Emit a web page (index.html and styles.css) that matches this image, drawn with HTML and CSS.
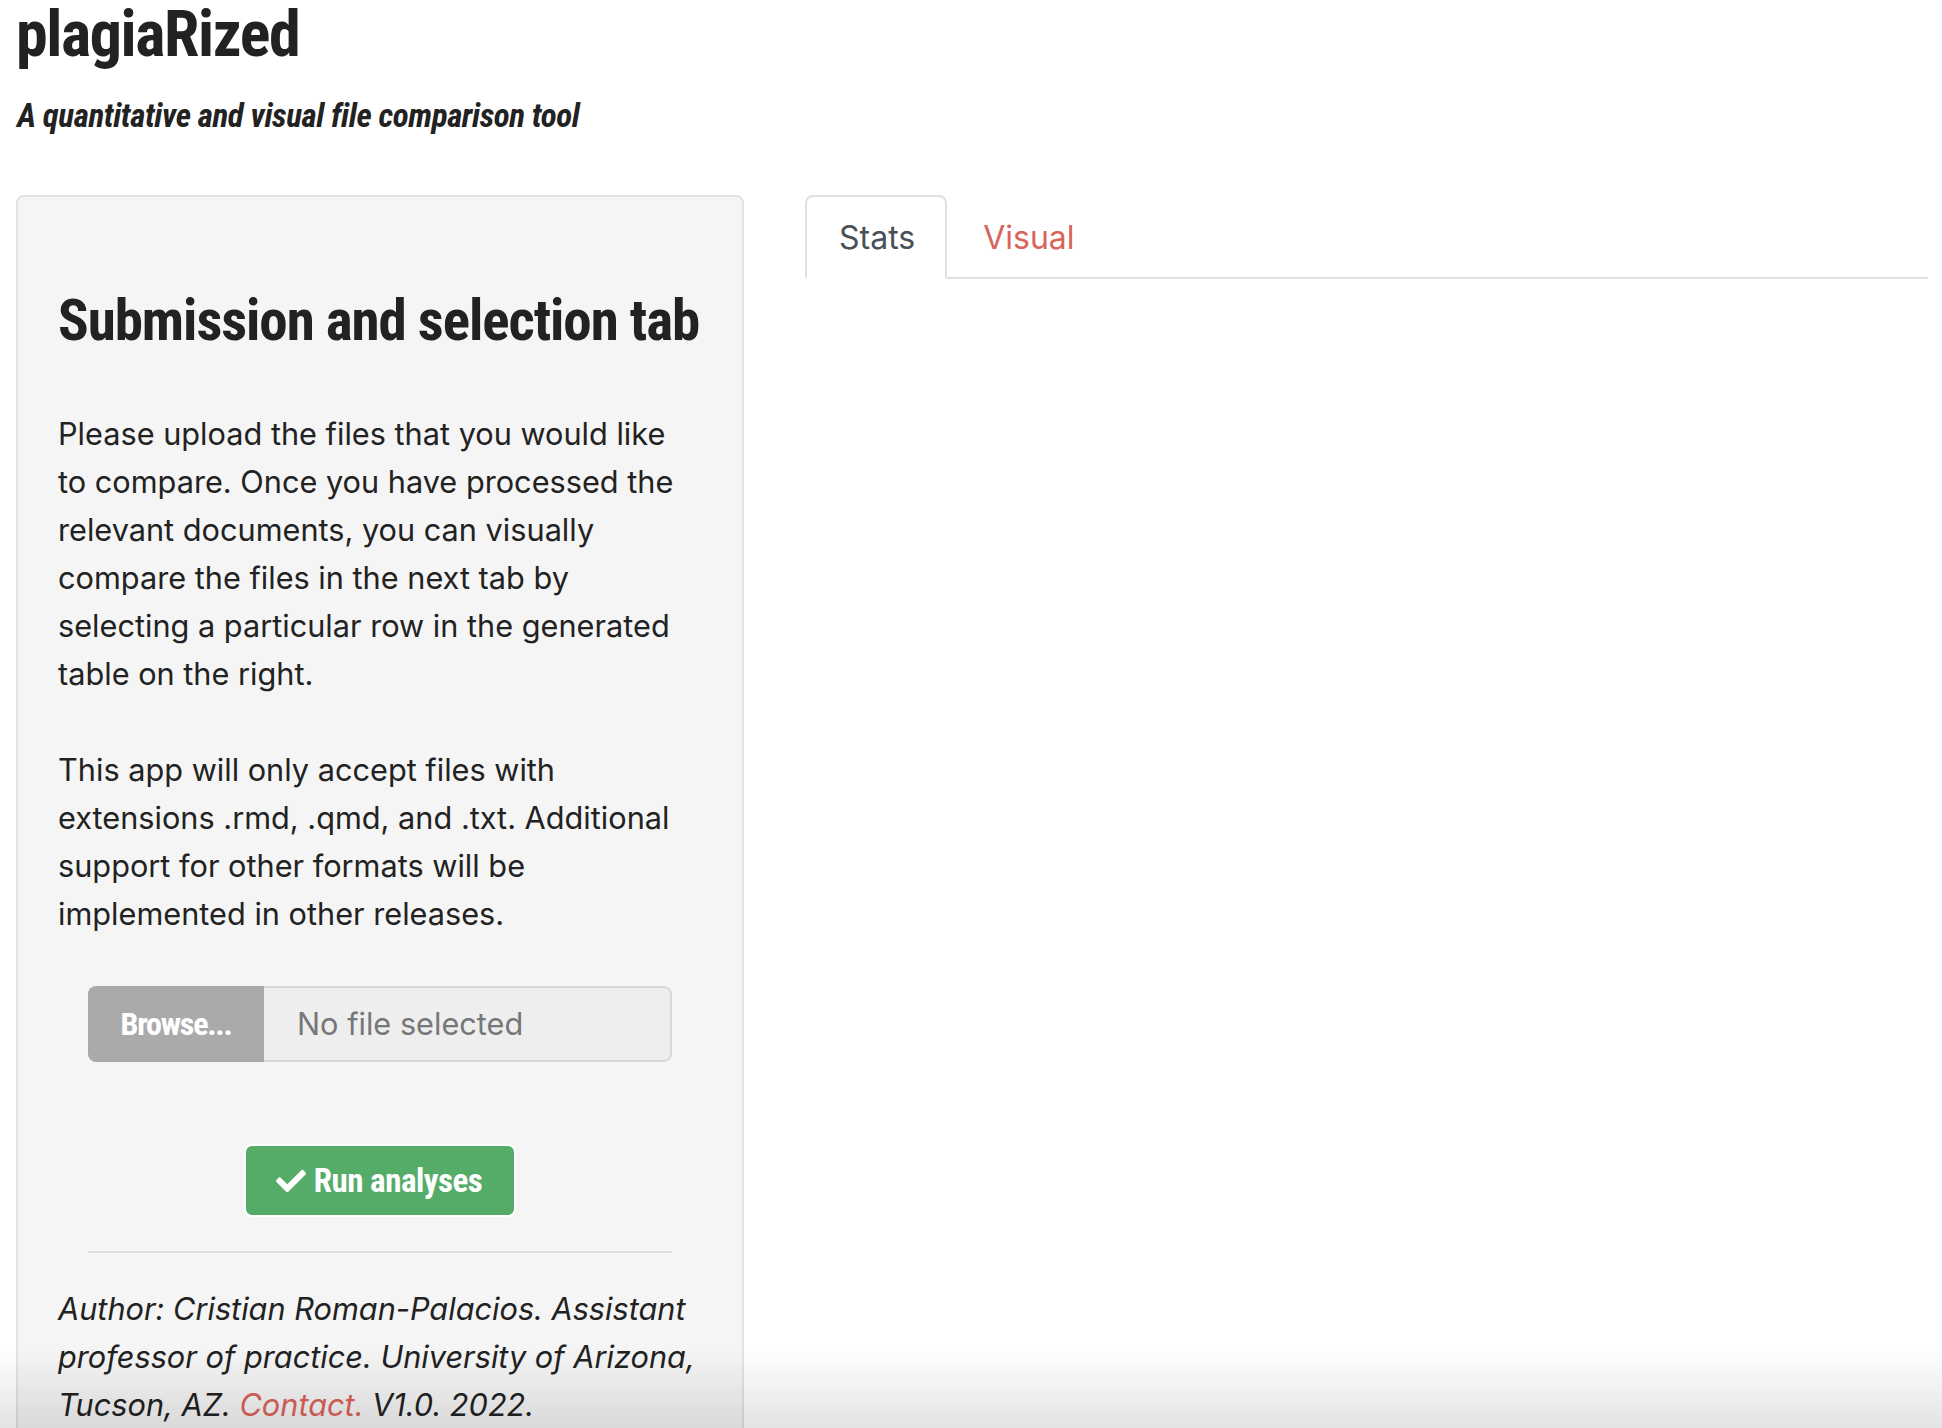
FILE: index.html
```html
<!DOCTYPE html>
<html lang="en">
<head>
<meta charset="utf-8">
<title>plagiaRized</title>
<link rel="stylesheet" href="styles.css">
</head>
<body>
<div class="page">
  <h1 class="title">plagiaRized</h1>
  <h4 class="tagline">A quantitative and visual file comparison tool</h4>
  <div class="layout">
    <div class="sidebar">
      <h2 class="sidebar-heading">Submission and selection tab</h2>
      <p class="text">Please upload the files that you would like to compare. Once you have processed the relevant documents, you can visually compare the files in the next tab by selecting a particular row in the generated table on the right.</p>
      <p class="text">This app will only accept files with extensions .rmd, .qmd, and .txt. Additional support for other formats will be implemented in other releases.</p>
      <div class="file-input">
        <span class="browse">Browse...</span>
        <span class="file-name">No file selected</span>
      </div>
      <div class="run-wrap">
        <button class="run-btn" type="button">
          <svg class="check" viewBox="0 0 512 512" width="30" height="30" aria-hidden="true"><path fill="#fff" d="M173.9 439.4l-166.4-166.4c-10-10-10-26.2 0-36.2l36.2-36.2c10-10 26.2-10 36.2 0L192 312.7 432.1 72.6c10-10 26.2-10 36.2 0l36.2 36.2c10 10 10 26.2 0 36.2l-294.4 294.4c-10 10-26.2 10-36.2 0z"/></svg>
          <span>Run analyses</span>
        </button>
      </div>
      <hr class="divider">
      <p class="author">Author: Cristian Roman-Palacios. Assistant professor of practice. University of Arizona, Tucson, AZ. <a class="contact" href="#">Contact.</a> V1.0. 2022.</p>
    </div>
    <div class="main">
      <ul class="tabs">
        <li class="tab active"><a href="#">Stats</a></li>
        <li class="tab"><a href="#">Visual</a></li>
      </ul>
    </div>
  </div>
</div>
<div class="fade"></div>
</body>
</html>
```

FILE: styles.css
```css
html, body {
  margin: 0;
  padding: 0;
  background: #fff;
}

body {
  font-family: Inter, Roboto, "Liberation Sans", sans-serif;
  font-size: 30.7px;
  line-height: 48px;
  color: #222;
  overflow: hidden;
  height: 1428px;
}

.page {
  padding: 3px 14px 0 16px;
}

.title,
.tagline,
.sidebar-heading,
.browse,
.run-btn {
  font-family: "Roboto Condensed", Roboto, sans-serif;
  font-stretch: condensed;
  font-weight: 700;
}

.title {
  font-size: 64px;
  line-height: 64px;
  letter-spacing: -1.4px;
  margin: 0;
  color: #222;
}

.tagline {
  font-style: italic;
  font-size: 33px;
  line-height: 33px;
  letter-spacing: -0.4px;
  margin: 32px 0 0 1px;
  color: #222;
}

.layout {
  display: grid;
  grid-template-columns: 728px 1fr;
  column-gap: 61px;
  margin-top: 63px;
}

.sidebar {
  background: #f5f5f5;
  border: 2px solid #e3e3e3;
  border-radius: 8px;
  padding: 40px 40px 60px 40px;
  min-height: 1300px;
}

.sidebar-heading {
  font-size: 57px;
  line-height: 57px;
  letter-spacing: -1.05px;
  margin: 55px 0 0 0;
  color: #222;
}

.text {
  margin: 61px 0 0 0;
}

.text + .text {
  margin-top: 48px;
}

.file-input {
  display: flex;
  margin: 48px 30px 0 30px;
  height: 76px;
  box-sizing: border-box;
  border-radius: 8px;
  overflow: hidden;
}

.browse {
  flex: 0 0 176px;
  background: #aaa;
  color: #fff;
  font-size: 32px;
  letter-spacing: -1.2px;
  display: flex;
  align-items: center;
  justify-content: center;
}

.file-name {
  flex: 1;
  background: #eee;
  color: #777;
  border: 2px solid #d6d9dc;
  border-left: none;
  border-radius: 0 8px 8px 0;
  display: flex;
  align-items: center;
  padding-left: 33px;
}

.run-wrap {
  display: flex;
  justify-content: center;
  margin-top: 82px;
}

.run-btn {
  display: flex;
  align-items: center;
  gap: 8px;
  height: 73px;
  padding: 0 32px 0 30px;
  background: #55ac69;
  border: 2px solid #fff;
  border-radius: 8px;
  color: #fff;
  font-size: 33px;
  letter-spacing: -0.5px;
}

.check {
  display: block;
}

.divider {
  border: 0;
  border-top: 2px solid #ddd;
  margin: 34px 30px 0 30px;
}

.author {
  font-style: italic;
  margin: 32px 0 0 0;
}

.contact {
  color: #d9645b;
  text-decoration: none;
}

.tabs {
  list-style: none;
  margin: 0;
  padding: 0;
  display: flex;
  border-bottom: 2px solid #dee2e6;
}

.tab {
  margin-bottom: -2px;
  margin-right: 2px;
}

.tab a {
  display: block;
  padding: 17px 30px 15px 32px;
  border: 2px solid transparent;
  border-radius: 8px 8px 0 0;
  text-decoration: none;
  color: #d9645b;
  font-size: 32px;
}

.tab.active a {
  color: #495057;
  background: #fff;
  border-color: #dee2e6 #dee2e6 #fff;
}

.fade {
  position: fixed;
  left: 0;
  right: 0;
  bottom: 0;
  height: 80px;
  background: linear-gradient(to bottom, rgba(0,0,0,0), rgba(0,0,0,0.11));
  pointer-events: none;
}
```
